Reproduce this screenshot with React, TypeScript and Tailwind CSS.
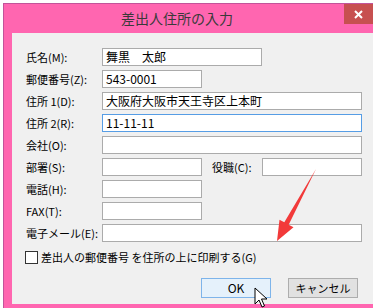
const font = { fontFamily: '"Noto Sans CJK JP", "Noto Sans", sans-serif' };

const Field = ({ value, width, focused }: { value?: string; width: string; focused?: boolean }) => (
  <div
    className={`${width} h-[18px] bg-white border ${focused ? 'border-[#569de5]' : 'border-[#ababab]'} flex items-center pl-[3px] text-[12px] leading-none text-black whitespace-pre`}
  >
    {value}
  </div>
);

const Row = ({ label, children }: { label: string; children: React.ReactNode }) => (
  <div className="flex items-center h-[18px]">
    <div className="w-[76px] text-[11px] leading-none text-black whitespace-nowrap">{label}</div>
    {children}
  </div>
);

export default function App() {
  return (
    <div className="relative w-[373px] h-[308px] bg-white pt-[3px] pl-[3px] overflow-hidden" style={font}>
      <div className="h-[305px] flex flex-col border-t border-l border-[#c2549a] bg-[#ff66b0]">
        {/* title bar */}
        <div className="h-[29px] flex items-start">
          <div className="flex-1 h-full flex items-center justify-center pl-[6px] text-[14px] text-[#3a3a3a]">
            差出人住所の入力
          </div>
          <div className="w-[29px] h-[20px] bg-[#c75050] flex items-center justify-center">
            <svg width="9" height="9" viewBox="0 0 9 9">
              <path d="M1 1 L8 8 M8 1 L1 8" stroke="#fff" strokeWidth="2" />
            </svg>
          </div>
        </div>

        {/* body */}
        <div className="ml-[8px] h-[271px] bg-[#f0f0f0] pt-[15px] pl-[14px] flex flex-col">
          <div className="flex flex-col gap-[4px]">
            <Row label="氏名(M):">
              <Field value="舞黒　太郎" width="w-[160px]" />
            </Row>
            <Row label="郵便番号(Z):">
              <Field value="543-0001" width="w-[100px]" />
            </Row>
            <Row label="住所 1(D):">
              <Field value="大阪府大阪市天王寺区上本町" width="w-[260px]" />
            </Row>
            <Row label="住所 2(R):">
              <Field value="11-11-11" width="w-[260px]" focused />
            </Row>
            <Row label="会社(O):">
              <Field width="w-[260px]" />
            </Row>
            <Row label="部署(S):">
              <Field width="w-[100px]" />
              <div className="w-[60px] pl-[10px] text-[11px] leading-none text-black whitespace-nowrap">役職(C):</div>
              <Field width="w-[100px]" />
            </Row>
            <Row label="電話(H):">
              <Field width="w-[100px]" />
            </Row>
            <Row label="FAX(T):">
              <Field width="w-[100px]" />
            </Row>
            <Row label="電子メール(E):">
              <Field width="w-[260px]" />
            </Row>
          </div>

          <div className="mt-[8px] h-[15px] flex items-center gap-[3px] ml-[-1px]">
            <div className="w-[13px] h-[13px] bg-white border border-[#333]" />
            <span className="text-[11px] leading-none text-black whitespace-nowrap">
              差出人の郵便番号 を住所の上に印刷する(G)
            </span>
          </div>

          <div className="mt-[13px] flex justify-end gap-[17px] pr-[15px]">
            <div className="w-[70px] h-[20px] bg-[#e5f1fb] border border-[#7eb4ea] flex items-center justify-center text-[12px] text-black">
              OK
            </div>
            <div className="w-[70px] h-[20px] bg-[#e1e1e1] border border-[#adadad] flex items-center justify-center text-[11px] text-black">
              キャンセル
            </div>
          </div>
        </div>
      </div>

      {/* annotation arrow and pointer */}
      <svg className="absolute left-0 top-0 pointer-events-none" width="373" height="308">
        <polygon
          points="316,169 288.7,224.7 293.5,227.3 277,241 279.5,219.7 284.3,222.3"
          fill="#f23a3a"
        />
        <path
          d="M255 288 L255 304 L259 300 L262 307 L264.5 306 L261.5 299 L267 299 Z"
          fill="#fff"
          stroke="#000"
          strokeWidth="1"
          strokeLinejoin="round"
        />
      </svg>
    </div>
  );
}
